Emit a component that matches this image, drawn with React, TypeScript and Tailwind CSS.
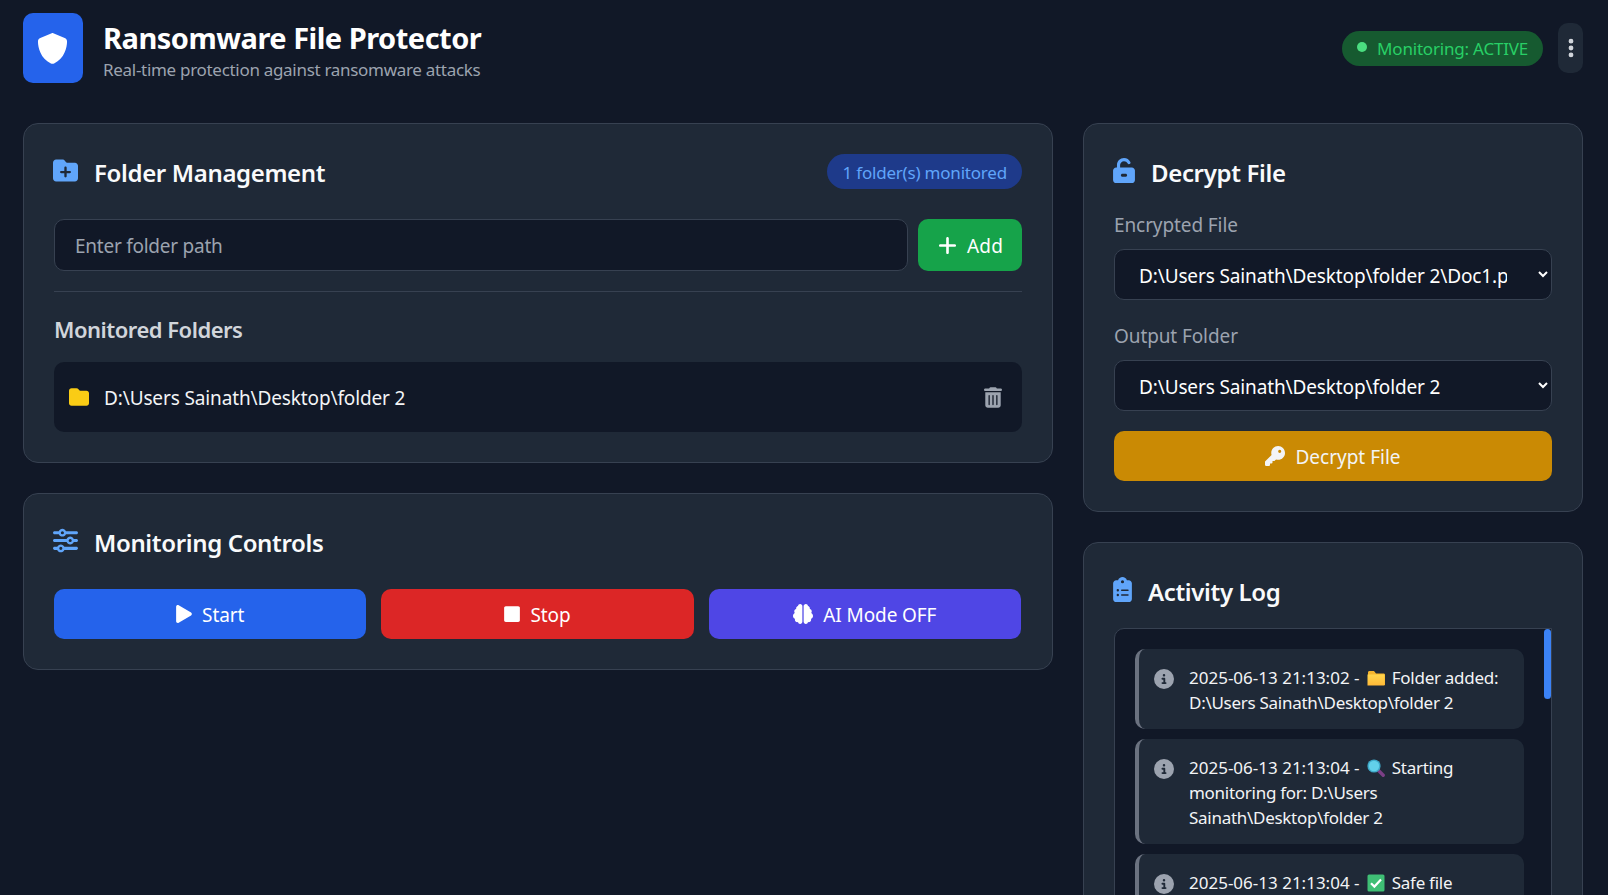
import { FaPlay, FaStop } from "react-icons/fa";
import { FaBrain, FaCircleInfo, FaClipboardList, FaEllipsisVertical, FaFolder, FaFolderPlus, FaKey, FaPlus, FaShield, FaSliders, FaTrashCan, FaUnlockKeyhole } from "react-icons/fa6";
import type { ReactNode } from "react";

const FolderEmoji = () => (
  <svg viewBox="0 0 18 18" className="mx-[3px] inline-block h-[18px] w-[18px] align-[-3px]">
    <defs>
      <linearGradient id="fe" x1="0" y1="0" x2="0" y2="1">
        <stop offset="0" stopColor="#ffd64d" />
        <stop offset="1" stopColor="#ffb938" />
      </linearGradient>
    </defs>
    <path d="M1 3.5C1 2.7 1.6 2 2.4 2H7l2 2.5h7.6c.8 0 1.4.6 1.4 1.4V16H1z" fill="#f5b52e" />
    <rect x="0.5" y="5.5" width="17" height="11" fill="url(#fe)" />
  </svg>
);

const SearchEmoji = () => (
  <svg viewBox="0 0 18 18" className="mx-[3px] inline-block h-[18px] w-[18px] align-[-3px]">
    <path d="M11 11l5.2 5.2" stroke="#7b3f86" strokeWidth="3.4" strokeLinecap="round" />
    <circle cx="7" cy="7" r="6.6" fill="#3fa9c9" />
    <circle cx="7" cy="7" r="5.2" fill="#62d0ea" />
  </svg>
);

const CheckEmoji = () => (
  <svg viewBox="0 0 18 18" className="mx-[3px] inline-block h-[18px] w-[18px] align-[-3px]">
    <rect x="0.5" y="0.5" width="17" height="17" rx="1.5" fill="#3fbf75" />
    <path d="M4 9.2l3.4 3.4L14 5.6" stroke="#ffffff" strokeWidth="2.2" fill="none" />
  </svg>
);

function Card({ children, className = "" }: { children: ReactNode; className?: string }) {
  return <section className={`rounded-[15px] border border-[#374151] bg-[#1f2937] p-[30px] ${className}`}>{children}</section>;
}

function CardTitle({ icon, children }: { icon: ReactNode; children: ReactNode }) {
  return (
    <h2 className="flex h-[35px] items-center gap-[16px] text-[24px] font-semibold tracking-[-0.35px] text-[#f9fafb]">
      {icon}
      <span className="translate-y-[1px]">{children}</span>
    </h2>
  );
}

function ActionButton({ icon, label, color }: { icon: ReactNode; label: string; color: string }) {
  return (
    <button className={`flex h-[50px] items-center justify-center gap-[10px] rounded-[10px] text-[19px] tracking-[-0.1px] text-white ${color}`}>
      {icon}
      <span className="translate-y-[1px]">{label}</span>
    </button>
  );
}

function LogItem({ children }: { children: ReactNode }) {
  return (
    <div className="flex gap-[15px] rounded-[10px] border-l-4 border-[#6b7280] bg-[#1f2937] p-[15px]">
      <FaCircleInfo className="mt-[5px] h-[20px] w-[20px] shrink-0 text-[#9ca3af]" />
      <p className="translate-y-[1px] text-[17px] leading-[25px] tracking-[-0.28px] whitespace-nowrap text-[#f3f4f6]">{children}</p>
    </div>
  );
}

const Stamp = ({ children }: { children: ReactNode }) => <span className="tracking-[0px]">{children}</span>;

export default function App() {
  return (
    <div className="h-[895px] overflow-hidden bg-[#111827] pt-[13px] pr-[25px] pl-[23px] font-['Noto_Sans',sans-serif] text-white">
      <header className="mb-[40px] flex h-[70px] items-start justify-between">
        <div className="flex items-start gap-[20px]">
          <div className="flex h-[70px] w-[60px] items-center justify-center rounded-[10px] bg-[#2563eb]">
            <FaShield className="h-[31px] w-[31px] -translate-x-[1px] text-white" />
          </div>
          <div className="pt-[5px]">
            <h1 className="text-[29px] leading-[40px] font-bold tracking-[-0.5px] text-white">Ransomware File Protector</h1>
            <p className="translate-y-[1px] text-[17px] leading-[22px] tracking-[-0.3px] text-[#9ca3af]">Real-time protection against ransomware attacks</p>
          </div>
        </div>
        <div className="mt-[10px] flex h-[50px] items-center gap-[15px]">
          <div className="flex h-[35px] items-center gap-[10px] rounded-full bg-[#165a30] px-[15px] text-[17px] tracking-[-0.2px] text-[#28cf66]">
            <span className="h-[10px] w-[10px] -translate-y-[1px] rounded-full bg-[#4ade80]" />
            <span className="translate-y-[1px]">Monitoring: ACTIVE</span>
          </div>
          <button className="flex h-[50px] w-[25px] items-center justify-center rounded-[10px] bg-[#1f2937] text-[#d1d5db]">
            <FaEllipsisVertical className="h-[22px] w-[6px]" />
          </button>
        </div>
      </header>

      <main className="grid grid-cols-[1030px_500px] gap-[30px]">
        <div className="flex flex-col gap-[30px]">
          <Card>
            <div className="mb-[30px] flex items-center justify-between">
              <CardTitle icon={<FaFolderPlus className="-ml-[1px] h-[25px] w-[25px] -translate-y-[1px] text-[#60a5fa]" />}>Folder Management</CardTitle>
              <span className="flex h-[35px] items-center rounded-full bg-[#1e3a8a] px-[15px] text-[17px] tracking-[-0.2px] text-[#60a5fa]">
                <span className="translate-y-[1px]">1 folder(s) monitored</span>
              </span>
            </div>
            <div className="flex gap-[10px]">
              <input
                placeholder="Enter folder path"
                className="h-[52px] flex-1 rounded-[10px] border border-[#374151] bg-[#111827] px-[20px] pt-[2px] text-[19px] tracking-[-0.25px] text-white outline-none placeholder:text-[#9ca3af]"
              />
              <button className="flex h-[52px] w-[104px] items-center justify-center gap-[9px] rounded-[10px] bg-[#16a34a] text-[19px] tracking-[0.2px] text-white">
                <FaPlus className="h-[21px] w-[21px]" />
                <span className="translate-y-[1px]">Add</span>
              </button>
            </div>
            <div className="mt-[20px] border-t border-[#374151] pt-[22px]">
              <h3 className="mb-[18px] text-[22px] leading-[30px] font-semibold tracking-[-0.5px] text-[#d1d5db]">Monitored Folders</h3>
              <div className="flex h-[70px] items-center justify-between rounded-[10px] bg-[#111827] pr-[20px] pl-[15px]">
                <div className="flex items-center gap-[15px]">
                  <FaFolder className="h-[20px] w-[20px] text-[#facc15]" />
                  <span className="translate-y-[1px] text-[19px] tracking-[-0.13px] text-[#f3f4f6]">D:\Users Sainath\Desktop\folder 2</span>
                </div>
                <FaTrashCan className="h-[21px] w-[18px] text-[#9ca3af]" />
              </div>
            </div>
          </Card>

          <Card>
            <div className="mb-[30px]">
              <CardTitle icon={<FaSliders className="-ml-[1px] h-[25px] w-[25px] -translate-y-[1px] text-[#60a5fa]" />}>Monitoring Controls</CardTitle>
            </div>
            <div className="grid grid-cols-3 gap-[15px] pr-[1px]">
              <ActionButton icon={<FaPlay className="h-[18px] w-[16px]" />} label="Start" color="bg-[#2563eb]" />
              <ActionButton icon={<FaStop className="h-[18px] w-[16px]" />} label="Stop" color="bg-[#dc2626]" />
              <ActionButton icon={<FaBrain className="h-[20px] w-[20px]" />} label="AI Mode OFF" color="bg-[#4f46e5]" />
            </div>
          </Card>
        </div>

        <div className="flex flex-col gap-[30px]">
          <Card>
            <div className="mb-[20px]">
              <CardTitle icon={<FaUnlockKeyhole className="-ml-[1px] h-[25px] w-[22px] -translate-y-[1px] text-[#60a5fa]" />}>Decrypt File</CardTitle>
            </div>
            <label className="mb-[10px] block translate-y-[1px] text-[19px] leading-[30px] tracking-[-0.1px] text-[#9ca3af]">Encrypted File</label>
            <select className="mb-[20px] h-[51px] w-full rounded-[10px] border border-[#374151] bg-[#111827] pt-[3px] pr-[28px] pl-[20px] text-[19px] tracking-[-0.13px] text-white outline-none">
              <option>D:\Users Sainath\Desktop\folder 2\Doc1.pdf.encrypted</option>
            </select>
            <label className="mb-[10px] block translate-y-[1px] text-[19px] leading-[30px] tracking-[-0.1px] text-[#9ca3af]">Output Folder</label>
            <select className="mb-[20px] h-[51px] w-full rounded-[10px] border border-[#374151] bg-[#111827] pt-[3px] pr-[28px] pl-[20px] text-[19px] tracking-[-0.13px] text-white outline-none">
              <option>D:\Users Sainath\Desktop\folder 2</option>
            </select>
            <button className="flex h-[50px] w-full items-center justify-center gap-[10px] rounded-[10px] bg-[#ca8a04] text-[19px] text-[#f3f4f6]">
              <FaKey className="h-[20px] w-[20px]" />
              <span className="translate-y-[1px]">Decrypt File</span>
            </button>
          </Card>

          <Card className="h-[600px]">
            <div className="mb-[20px]">
              <CardTitle icon={<FaClipboardList className="-ml-[1px] h-[25px] w-[19px] -translate-y-[1px] text-[#60a5fa]" />}>Activity Log</CardTitle>
            </div>
            <div className="relative flex h-[480px] flex-col gap-[10px] overflow-hidden rounded-[10px] rounded-tr-none border border-[#374151] bg-[#111827] py-[20px] pr-[27px] pl-[20px]">
              <div className="absolute top-0 right-0 h-[70px] w-[7px] rounded-full bg-[#3b82f6]" />
              <LogItem>
                <Stamp>2025-06-13 21:13:02 -</Stamp> <FolderEmoji /> Folder added:
                <br />
                D:\Users Sainath\Desktop\folder 2
              </LogItem>
              <LogItem>
                <Stamp>2025-06-13 21:13:04 -</Stamp> <SearchEmoji /> Starting
                <br />
                monitoring for: D:\Users
                <br />
                Sainath\Desktop\folder 2
              </LogItem>
              <LogItem>
                <Stamp>2025-06-13 21:13:04 -</Stamp> <CheckEmoji /> Safe file
              </LogItem>
            </div>
          </Card>
        </div>
      </main>
    </div>
  );
}
